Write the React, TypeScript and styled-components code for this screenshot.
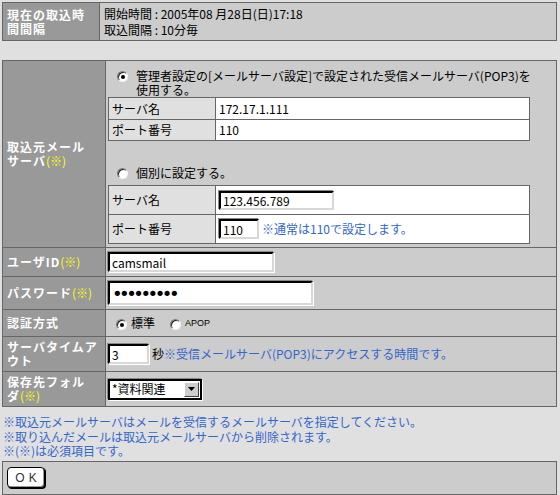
import styled, { createGlobalStyle } from "styled-components";

const GlobalStyle = createGlobalStyle`
  html, body {
    margin: 0;
    padding: 0;
    background: #e0e0e0;
  }
  body {
    padding: 2px;
    font-family: "Noto Sans CJK JP", "Noto Sans", sans-serif;
    font-size: 12px;
    line-height: 14px;
    color: #000;
  }
`

const Page = styled.div`
    width: 555px;
    display: flex;
    flex-direction: column;
`

const Grid = styled.div<{ $labelWidth: number; $rows: string }>`
    display: grid;
    grid-template-columns: ${(p) => p.$labelWidth}px 1fr;
    grid-template-rows: ${(p) => p.$rows};
    gap: 1px;
    padding: 1px;
    background: #666;
`

const MainGrid = styled(Grid)`
    margin-top: 19px;
`

const Label = styled.div`
    background: #999;
    color: #fff;
    font-weight: bold;
    letter-spacing: 1px;
    display: flex;
    align-items: center;
    padding: 0 4px;
    line-height: 14px;
`

const Req = styled.span`
    color: #ffff00;
    font-weight: normal;
    letter-spacing: 0;
`

const Value = styled.div`
    background: #ccc;
    display: flex;
    align-items: center;
    padding: 0 2px;
`

const InfoValue = styled(Value)`
    padding: 0 4px;
    line-height: 16px;
`

const ServerValue = styled(Value)`
    flex-direction: column;
    align-items: flex-start;
    justify-content: flex-start;
    padding: 8px 2px 0;
`

const Option = styled.div<{ $gapTop?: number }>`
    display: flex;
    align-items: flex-start;
    gap: 8px;
    padding-left: 9px;
    margin-top: ${(p) => p.$gapTop || 0}px;
    margin-bottom: ${(p) => (p.$gapTop ? 5 : 0)}px;
`

const Radio = styled.span<{ $checked?: boolean }>`
    position: relative;
    flex: none;
    width: 11px;
    height: 11px;
    margin-top: 2px;
    border-radius: 50%;
    box-sizing: border-box;
    background: #fff;
    border: 1px solid;
    border-color: #7a7a7a #f4f4f4 #f4f4f4 #7a7a7a;
    box-shadow: inset 1px 1px 0 #202020;
    &::after {
        content: "";
        display: ${(p) => (p.$checked ? "block" : "none")};
        position: absolute;
        left: 3px;
        top: 3px;
        width: 4px;
        height: 4px;
        border-radius: 50%;
        background: #000;
    }
`

const SubGrid = styled.div<{ $rows: string }>`
    display: grid;
    grid-template-columns: 106px 1fr;
    grid-template-rows: ${(p) => p.$rows};
    gap: 1px;
    padding: 1px;
    background: #666;
    width: 422px;
    box-sizing: border-box;
`

const SubLabel = styled.div`
    background: #e0e0e0;
    display: flex;
    align-items: center;
    padding: 0 3px;
`

const SubValue = styled.div`
    background: #fff;
    display: flex;
    align-items: center;
    padding: 0 3px;
`

const Field = styled.input<{ $w: number; $h: number }>`
    width: ${(p) => p.$w}px;
    height: ${(p) => p.$h}px;
    box-sizing: border-box;
    margin: 0;
    padding: 0 2px;
    background: #fff;
    border: 2px solid;
    border-color: #000 #d8d8d8 #d8d8d8 #000;
    box-shadow: -1px -1px 0 #888, 1px 1px 0 #fff;
    font: 12px "Noto Sans CJK JP", "Noto Sans", sans-serif;
    color: #000;
    outline: none;
`

const PasswordField = styled(Field)`
    font: 18px "DejaVu Sans", sans-serif;
    letter-spacing: -3.5px;
`

const Note = styled.span`
    color: #3366cc;
`

const AfterField = styled.span`
    margin-left: 3px;
`

const AuthRow = styled.div`
    display: flex;
    align-items: center;
    padding-left: 8px;
`

const AuthLabel = styled.span<{ $small?: boolean }>`
    margin-left: 4px;
    margin-right: ${(p) => (p.$small ? 0 : 15)}px;
    font-size: ${(p) => (p.$small ? "9px" : "12px")};
    font-family: ${(p) => (p.$small ? '"Liberation Sans", sans-serif' : "inherit")};
`

const SelectBox = styled.div`
    width: 94px;
    height: 21px;
    box-sizing: border-box;
    display: flex;
    align-items: center;
    justify-content: space-between;
    background: #fff;
    border: 2px solid #000;
    box-shadow: -1px -1px 0 #888, 1px 1px 0 #fff;
    padding: 0 1px 0 2px;
`

const SelectArrow = styled.span`
    width: 15px;
    height: 15px;
    box-sizing: border-box;
    background: #ccc;
    border: 1px solid;
    border-color: #fff #404040 #404040 #fff;
    display: flex;
    align-items: center;
    justify-content: center;
`

const Notes = styled.div`
    margin-top: 8px;
    padding-left: 1px;
    color: #3366cc;
    line-height: 14.5px;
`

const ButtonBar = styled.div`
    margin-top: 2px;
    border: 1px solid #666;
    background: #ccc;
    height: 32px;
    display: flex;
    align-items: center;
    padding-left: 4px;
`

const OkButton = styled.button`
    width: 38px;
    height: 21px;
    box-sizing: border-box;
    margin: 0;
    padding: 0 0 0 4px;
    background: #fff;
    border: 1px solid #000;
    border-radius: 4px;
    box-shadow: inset -1px -1px 0 #999, 1px 1px 0 #000;
    font: 12px "Liberation Sans", sans-serif;
    letter-spacing: 4px;
    color: #333;
`

export default function App() {
    return (
        <>
            <GlobalStyle />
            <Page>
                <Grid $labelWidth={96} $rows="37px">
                    <Label>現在の取込時<br />間間隔</Label>
                    <InfoValue>開始時間 : 2005年08 月28日(日)17:18<br />取込間隔 : 10分毎</InfoValue>
                </Grid>

                <MainGrid $labelWidth={102} $rows="186px 28px 32px 26px 34px 34px">
                    <Label>
                        <span>取込元メール<br />サーバ<Req>(※)</Req></span>
                    </Label>
                    <ServerValue>
                        <Option>
                            <Radio $checked />
                            <span>管理者設定の[メールサーバ設定]で設定された受信メールサーバ(POP3)を<br />使用する。</span>
                        </Option>
                        <SubGrid $rows="21px 20px">
                            <SubLabel>サーバ名</SubLabel>
                            <SubValue>172.17.1.111</SubValue>
                            <SubLabel>ポート番号</SubLabel>
                            <SubValue>110</SubValue>
                        </SubGrid>
                        <Option $gapTop={25}>
                            <Radio />
                            <span>個別に設定する。</span>
                        </Option>
                        <SubGrid $rows="28px 28px">
                            <SubLabel>サーバ名</SubLabel>
                            <SubValue>
                                <Field $w={115} $h={19} defaultValue="123.456.789" />
                            </SubValue>
                            <SubLabel>ポート番号</SubLabel>
                            <SubValue>
                                <Field $w={40} $h={20} defaultValue="110" />
                                <AfterField><Note>※通常は110で設定します。</Note></AfterField>
                            </SubValue>
                        </SubGrid>
                    </ServerValue>

                    <Label><span>ユーザID<Req>(※)</Req></span></Label>
                    <Value>
                        <Field $w={166} $h={20} defaultValue="camsmail" />
                    </Value>

                    <Label><span>パスワード<Req>(※)</Req></span></Label>
                    <Value>
                        <PasswordField type="password" $w={205} $h={24} defaultValue="123456789" />
                    </Value>

                    <Label>認証方式</Label>
                    <Value>
                        <AuthRow>
                            <Radio $checked />
                            <AuthLabel>標準</AuthLabel>
                            <Radio />
                            <AuthLabel $small>APOP</AuthLabel>
                        </AuthRow>
                    </Value>

                    <Label><span>サーバタイムア<br />ウト</span></Label>
                    <Value>
                        <Field $w={41} $h={20} defaultValue="3" />
                        <AfterField>
                            秒<Note>※受信メールサーバ(POP3)にアクセスする時間です。</Note>
                        </AfterField>
                    </Value>

                    <Label><span>保存先フォル<br />ダ<Req>(※)</Req></span></Label>
                    <Value>
                        <SelectBox>
                            <span>*資料関連</span>
                            <SelectArrow>
                                <svg width="7" height="4" viewBox="0 0 7 4">
                                    <path d="M0 0h7L3.5 4z" fill="#000" />
                                </svg>
                            </SelectArrow>
                        </SelectBox>
                    </Value>
                </MainGrid>

                <Notes>
                    ※取込元メールサーバはメールを受信するメールサーバを指定してください。<br />
                    ※取り込んだメールは取込元メールサーバから削除されます。<br />
                    ※(※)は必須項目です。
                </Notes>

                <ButtonBar>
                    <OkButton type="button">OK</OkButton>
                </ButtonBar>
            </Page>
        </>
    )
}
